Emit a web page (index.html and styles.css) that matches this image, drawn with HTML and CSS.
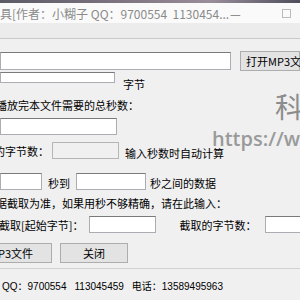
FILE: index.html
```html
<!DOCTYPE html>
<html lang="zh">
<head>
    <meta charset="UTF-8">
    <title>MP3截取工具</title>
    <link rel="stylesheet" href="styles.css">
</head>
<body>
    <div class="desk"></div>
    <div class="titlebar">
        <span class="title">工具[作者：小糊子 QQ：9700554&nbsp;&nbsp;1130454...</span>
        <span class="win-min">—</span>
        <span class="win-max"></span>
    </div>
    <div class="menubar"></div>

    <div class="client">
        <div class="row row-file">
            <input type="text" class="edit edit-path">
            <button type="button" class="btn btn-open">打开MP3文件</button>
        </div>
        <div class="row row-size">
            <input type="text" class="edit edit-size">
            <span class="lbl lbl-unit">字节</span>
        </div>
        <div class="row row-text">
            <span class="lbl cut">播放完本文件需要的总秒数：</span>
        </div>
        <div class="row row-secs">
            <input type="text" class="edit edit-secs">
        </div>
        <div class="row row-bps">
            <span class="lbl cut">的字节数：</span>
            <input type="text" class="edit edit-bps" disabled>
            <span class="lbl lbl-auto">输入秒数时自动计算</span>
        </div>
        <div class="row row-range">
            <input type="text" class="edit edit-from">
            <span class="lbl lbl-to">秒到</span>
            <input type="text" class="edit edit-to">
            <span class="lbl lbl-between">秒之间的数据</span>
        </div>
        <div class="row row-text row-note">
            <span class="lbl cut">据截取为准，如果用秒不够精确，请在此输入：</span>
        </div>
        <div class="row row-bytes">
            <span class="lbl cut lbl-start">截取[起始字节]：</span>
            <input type="text" class="edit edit-start">
            <span class="lbl lbl-len">截取的字节数：</span>
            <input type="text" class="edit edit-len">
        </div>
        <div class="row row-btns">
            <button type="button" class="btn btn-save">存MP3文件</button>
            <button type="button" class="btn btn-close">关闭</button>
        </div>
    </div>

    <div class="statusbar">
        <span>QQ：9700554</span>
        <span class="sb-gap">113045459</span>
        <span class="sb-gap">电话：13589495963</span>
    </div>

    <!-- 水印 -->
    <div class="mark-big">科</div>
    <div class="mark-url">https://www</div>
</body>
</html>
```

FILE: styles.css
```css
body {
    margin: 0;
    width: 300px;
    height: 300px;
    overflow: hidden;
    position: relative;
    background: #f0f0f0;
    font-family: "Noto Sans CJK SC", sans-serif;
    font-size: 11px;
    color: #000;
}
.desk {
    height: 3px;
    background: linear-gradient(90deg, #5b5b66, #7d7480 40%, #9a8e9a 70%, #4e4e5c);
}
.titlebar {
    height: 20px;
    display: flex;
    align-items: center;
    background: #fafafa;
    color: #8a8a8a;
    font-size: 12px;
}
.title {
    flex: 1;
    white-space: nowrap;
    overflow: hidden;
    margin-left: -12px;
}
.win-min {
    width: 10px;
    margin-right: 42px;
    color: #777;
}
.win-max {
    width: 7px;
    height: 7px;
    border: 1px solid #bbb;
    margin-right: 9px;
}
.menubar {
    height: 15px;
    background: #ececec;
    border-bottom: 1px solid #c9c9c9;
}
.client {
    box-sizing: border-box;
    height: 229px;
    padding-top: 12px;
}
.row {
    display: flex;
    align-items: center;
    white-space: nowrap;
}
.edit {
    box-sizing: border-box;
    height: 17px;
    background: #fff;
    border: 1px solid #abadb3;
    border-top-color: #7a7a7a;
    margin: 0;
    padding: 0;
}
.edit[disabled] {
    background: #f0f0f0;
    border-color: #b5b5b5;
}
.btn {
    box-sizing: border-box;
    height: 20px;
    background: #e3e3e3;
    border: 1px solid #adadad;
    font-family: "Noto Sans CJK SC", sans-serif;
    font-size: 11px;
    padding: 0;
    color: #000;
}
.cut {
    margin-left: -4px;
}
.row-file {
    height: 20px;
}
.edit-path {
    width: 249px;
    height: 18px;
}
.btn-open {
    width: 60px;
    margin-left: 9px;
    text-align: left;
    padding-left: 5px;
}
.row-size {
    margin-top: 1px;
    height: 18px;
}
.edit-size {
    width: 115px;
    height: 11px;
    align-self: flex-start;
}
.lbl-unit {
    margin-left: 8px;
    margin-top: 6px;
}
.row-text {
    margin-top: 8px;
    height: 14px;
}
.row-secs {
    margin-top: 6px;
    height: 17px;
}
.edit-secs {
    width: 117px;
}
.row-bps {
    margin-top: 7px;
    height: 17px;
}
.row-bps .cut {
    margin-left: -6px;
}
.edit-bps {
    width: 67px;
    margin-left: 3px;
}
.lbl-auto {
    margin-left: 6px;
    margin-top: 4px;
}
.row-range {
    margin-top: 13px;
    height: 18px;
}
.edit-from {
    width: 42px;
    height: 17px;
}
.lbl-to {
    margin-left: 6px;
    margin-top: 4px;
}
.edit-to {
    width: 70px;
    margin-left: 6px;
}
.lbl-between {
    margin-left: 4px;
    margin-top: 4px;
}
.row-note {
    margin-top: 6px;
}
.row-bytes {
    margin-top: 6px;
    height: 17px;
}
.lbl-start {
    margin-left: -1px;
}
.edit-start {
    width: 67px;
    margin-left: 6px;
}
.lbl-len {
    margin-left: 23px;
}
.edit-len {
    width: 60px;
    margin-left: 9px;
}
.row-btns {
    margin-top: 10px;
    height: 20px;
}
.btn-save {
    width: 93px;
    margin-left: -41px;
}
.btn-close {
    width: 68px;
    margin-left: 8px;
}
.statusbar {
    box-sizing: border-box;
    height: 32px;
    border-top: 1px solid #d0d0d0;
    padding-top: 11px;
    padding-left: 2px;
    display: flex;
    align-items: baseline;
    white-space: nowrap;
    line-height: 14px;
    font-family: "Liberation Sans", "Noto Sans CJK SC", sans-serif;
    font-size: 10px;
}
.sb-gap {
    margin-left: 8px;
}
.mark-big {
    position: absolute;
    left: 275px;
    top: 92px;
    font-size: 28px;
    color: #8c8c8c;
    line-height: 1;
}
.mark-url {
    position: absolute;
    left: 212px;
    top: 129px;
    font-family: "Open Sans", sans-serif;
    font-weight: 600;
    font-size: 20px;
    color: #9a9a9a;
    line-height: 1;
}
```
